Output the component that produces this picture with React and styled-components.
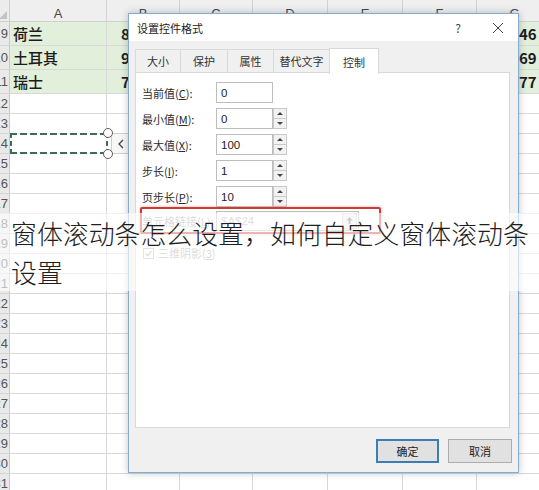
import React from 'react';
import styled, { createGlobalStyle } from 'styled-components';

const Global = createGlobalStyle`
  html, body { margin: 0; padding: 0; background: #fff; }
  body { width: 539px; height: 490px; overflow: hidden; font-family: "Noto Sans CJK SC", "Noto Sans", sans-serif; }
  * { box-sizing: border-box; }
`;

const Stage = styled.div`
  position: relative;
  width: 539px;
  height: 490px;
  overflow: hidden;
  background: #fff;
`;

const COLS = [10, 97, 73, 73, 75, 75, 74, 76];

const Sheet = styled.div`
  display: grid;
  grid-template-columns: ${COLS.map((c) => c + 'px').join(' ')};
  grid-template-rows: 22px repeat(3, 24px) repeat(20, 20px);
`;

const Corner = styled.div`
  position: relative;
  background: #ececec;
  border-right: 1px solid #cfcfcf;
  border-bottom: 1px solid #cfcfcf;
  &::after {
    content: '';
    position: absolute;
    right: 2px;
    bottom: 2px;
    border-left: 8px solid transparent;
    border-bottom: 8px solid #c4c4c4;
  }
`;

const ColHead = styled.div`
  background: #efefef;
  border-right: 1px solid #d2d2d2;
  border-bottom: 1px solid #cfcfcf;
  display: flex;
  align-items: center;
  justify-content: center;
  padding-top: 5px;
  font-family: "Liberation Sans", Arial, sans-serif;
  font-size: 13px;
  color: #444;
`;

const RowHead = styled.div`
  background: #e9e9e9;
  border-right: 1px solid #c9c9c9;
  border-bottom: 1px solid #d4d4d4;
  display: flex;
  align-items: center;
  justify-content: flex-end;
  overflow: hidden;
  padding-right: 1px;
  font-family: "Liberation Sans", Arial, sans-serif;
  font-size: 13px;
  color: #555;
  white-space: nowrap;
`;

const Cell = styled.div`
  background: ${(p) => (p.$fill ? '#e2efda' : '#fff')};
  border-right: 1px solid #d8d8d8;
  border-bottom: 1px solid #d8d8d8;
  display: flex;
  align-items: center;
  padding-left: ${(p) => p.$pad || 4}px;
  font-family: "Noto Sans CJK SC", "Liberation Sans", sans-serif;
  font-size: 15px;
  font-weight: ${(p) => (p.$bold ? 700 : 500)};
  color: #1c1c1c;
  white-space: nowrap;
  overflow: hidden;
`;

const DATA = [
  { n: 9, a: '荷兰', b: '85', g: '46' },
  { n: 10, a: '土耳其', b: '93', g: '69' },
  { n: 11, a: '瑞士', b: '78', g: '77' },
];

/* floating scrollbar control on the sheet */
const ScrollCtl = styled.div`
  position: absolute;
  left: 10px;
  top: 133px;
  display: flex;
  align-items: stretch;
  height: 21px;
`;

const DASH = '#3f6b57';
const DashBox = styled.div`
  position: relative;
  width: 98px;
  background:
    repeating-linear-gradient(90deg, ${DASH} 0 7px, transparent 7px 10px) top left / 100% 2px no-repeat,
    repeating-linear-gradient(90deg, ${DASH} 0 7px, transparent 7px 10px) bottom left / 100% 2px no-repeat,
    repeating-linear-gradient(180deg, ${DASH} 0 5px, transparent 5px 8px) top left / 2px 100% no-repeat,
    repeating-linear-gradient(180deg, ${DASH} 0 5px, transparent 5px 8px) top right / 2px 100% no-repeat,
    rgba(255, 255, 255, 0.6);
`;

const Handle = styled.div`
  position: absolute;
  right: -5px;
  ${(p) => (p.$bottom ? 'bottom: -5px;' : 'top: -5px;')}
  width: 10px;
  height: 10px;
  border-radius: 50%;
  background: #fff;
  border: 1.5px solid #5d5d5d;
`;

const ArrowBtn = styled.div`
  width: 19px;
  margin-left: 3px;
  border: 1px solid #cfcfcf;
  background: #f7f7f7;
  display: flex;
  align-items: center;
  justify-content: center;
  color: #444;
`;

/* dialog */
const Dialog = styled.div`
  position: absolute;
  left: 128px;
  top: 13px;
  width: 391px;
  height: 460px;
  border: 1px solid #86abcf;
  background: #f0f0f0;
  box-shadow: 0 0 7px rgba(60, 80, 110, 0.35);
  display: flex;
  flex-direction: column;
  font-family: "Noto Sans CJK SC", "Noto Sans", sans-serif;
  font-size: 11px;
  color: #222;
`;

const TitleBar = styled.div`
  height: 27px;
  background: #fff;
  display: flex;
  align-items: center;
  padding-left: 8px;
  padding-right: 10px;
  flex-shrink: 0;
`;

const Title = styled.span`
  flex: 1;
  font-size: 11px;
  color: #222;
`;

const TitleIcon = styled.span`
  width: 20px;
  display: flex;
  justify-content: center;
  color: #444;
  font-size: 12px;
  margin-left: ${(p) => p.$gap || 0}px;
`;

const Body = styled.div`
  flex: 1;
  padding: 7px 8px 0 6px;
  display: flex;
  flex-direction: column;
`;

const Tabs = styled.div`
  display: flex;
  align-items: flex-end;
  height: 25px;
  position: relative;
  z-index: 1;
`;

const Tab = styled.div`
  width: ${(p) => p.$w}px;
  height: ${(p) => (p.$active ? 26 : 24)}px;
  margin-bottom: ${(p) => (p.$active ? -1 : 0)}px;
  background: ${(p) => (p.$active ? '#fff' : '#f0f0f0')};
  border: 1px solid #d9d9d9;
  border-bottom: ${(p) => (p.$active ? 'none' : '1px solid #d9d9d9')};
  margin-left: -1px;
  display: flex;
  align-items: center;
  justify-content: center;
  color: #333;
  font-size: 11px;
  &:first-child { margin-left: 0; }
`;

const Panel = styled.div`
  height: 356px;
  background: #fff;
  border: 1px solid #d9d9d9;
  margin-top: -1px;
  padding: 9px 6px 0 6px;
  display: flex;
  flex-direction: column;
`;

const Row = styled.div`
  display: flex;
  align-items: center;
  height: 21px;
  margin-bottom: ${(p) => (p.$last ? 0 : 5)}px;
`;

const Label = styled.span`
  width: 74px;
  flex-shrink: 0;
  color: ${(p) => (p.$dim ? '#a3a3a3' : '#2a2a2a')};
  font-size: 11px;
  white-space: nowrap;
`;

const Input = styled.div`
  position: relative;
  width: ${(p) => p.$w || 57}px;
  height: ${(p) => p.$h || 21}px;
  border: 1px solid #bdbdbd;
  background: #fff;
  display: flex;
  align-items: center;
  padding-left: 4px;
  font-family: "Liberation Sans", Arial, sans-serif;
  font-size: 11.5px;
  color: ${(p) => (p.$dim ? '#ababab' : '#222')};
`;

const Spin = styled.div`
  width: 14px;
  height: 21px;
  display: flex;
  flex-direction: column;
`;

const SpinBtn = styled.div`
  flex: 1;
  border: 1px solid #c8c8c8;
  background: #f2f2f2;
  display: flex;
  align-items: center;
  justify-content: center;
  & + & { border-top: none; }
`;

const Tri = styled.span`
  width: 0;
  height: 0;
  border-left: 3px solid transparent;
  border-right: 3px solid transparent;
  ${(p) => (p.$down ? 'border-top: 3px solid #444;' : 'border-bottom: 3px solid #444;')}
`;

const LinkBox = styled.div`
  display: flex;
  align-items: center;
  width: 241px;
  height: 27px;
  margin-left: -2px;
  border: 2px solid #cf3a34;
  border-radius: 2px;
  box-shadow: 0 0 3px rgba(207, 58, 52, 0.45);
`;

const RefBtn = styled.div`
  position: absolute;
  right: 1px;
  top: 1px;
  width: 15px;
  height: 16px;
  background: #ececec;
  border: 1px solid #d0d0d0;
  display: flex;
  align-items: center;
  justify-content: center;
`;

const CheckRow = styled.div`
  display: flex;
  align-items: center;
  gap: 4px;
  margin-top: 12px;
  height: 14px;
  padding-left: 1px;
  color: #a3a3a3;
  font-size: 11px;
`;

const CheckBox = styled.div`
  width: 11px;
  height: 11px;
  border: 1px solid #b8b8b8;
  background: #fff;
  display: flex;
  align-items: center;
  justify-content: center;
`;

const Footer = styled.div`
  display: flex;
  justify-content: flex-end;
  gap: 9px;
  padding-top: 11px;
  margin-right: -2px;
`;

const Button = styled.div`
  width: ${(p) => p.$w}px;
  height: 24px;
  background: #e1e1e1;
  border: ${(p) => (p.$primary ? '2px solid #3c7db8' : '1px solid #adadad')};
  display: flex;
  align-items: center;
  justify-content: center;
  font-size: 11px;
  color: #222;
`;

/* caption overlay */
const Caption = styled.div`
  position: absolute;
  left: 0;
  top: 213px;
  width: 539px;
  padding-left: 11px;
  padding-right: 8px;
  background: rgba(255, 255, 255, 0.62);
  font-family: "Noto Sans CJK SC", "Noto Sans", sans-serif;
  font-weight: 300;
  font-size: 25.9px;
  line-height: 39px;
  color: #1e1e1e;
  word-break: break-all;
`;

const Spinner = () => (
  <Spin>
    <SpinBtn><Tri /></SpinBtn>
    <SpinBtn><Tri $down /></SpinBtn>
  </Spin>
);

const FIELDS = [
  { pre: '当前值(', key: 'C', v: '0', spin: false },
  { pre: '最小值(', key: 'M', v: '0', spin: true },
  { pre: '最大值(', key: 'X', v: '100', spin: true },
  { pre: '步长(', key: 'I', v: '1', spin: true },
  { pre: '页步长(', key: 'P', v: '10', spin: true },
];

const TABS = [
  { t: '大小', w: 46 },
  { t: '保护', w: 48 },
  { t: '属性', w: 47 },
  { t: '替代文字', w: 57 },
  { t: '控制', w: 50, active: true },
];

export default function App() {
  const letters = ['A', 'B', 'C', 'D', 'E', 'F', 'G'];
  const rows = [];
  DATA.forEach((d) => {
    rows.push(<RowHead key={'h' + d.n}>{d.n}</RowHead>);
    rows.push(<Cell key={'a' + d.n} $fill $pad={3}>{d.a}</Cell>);
    rows.push(<Cell key={'b' + d.n} $fill $bold $pad={14}>{d.b}</Cell>);
    ['c', 'd', 'e', 'f'].forEach((c) =>
      rows.push(<Cell key={c + d.n} $fill />)
    );
    rows.push(<Cell key={'g' + d.n} $fill $bold $pad={42}>{d.g}</Cell>);
  });
  for (let n = 12; n <= 31; n++) {
    rows.push(<RowHead key={'h' + n}>{n}</RowHead>);
    for (let c = 1; c < 8; c++) rows.push(<Cell key={n + '-' + c} />);
  }

  return (
    <Stage>
      <Global />
      <Sheet>
        <Corner />
        {letters.map((l) => (
          <ColHead key={l}>{l}</ColHead>
        ))}
        {rows}
      </Sheet>

      <ScrollCtl>
        <DashBox>
          <Handle />
          <Handle $bottom />
        </DashBox>
        <ArrowBtn>
          <svg width="8" height="10" viewBox="0 0 8 10">
            <polyline points="6,1 2,5 6,9" fill="none" stroke="#444" strokeWidth="1.3" />
          </svg>
        </ArrowBtn>
      </ScrollCtl>

      <Dialog>
        <TitleBar>
          <Title>设置控件格式</Title>
          <TitleIcon>?</TitleIcon>
          <TitleIcon $gap={20}>
            <svg width="12" height="12" viewBox="0 0 12 12">
              <path d="M1 1 L11 11 M11 1 L1 11" stroke="#444" strokeWidth="1" />
            </svg>
          </TitleIcon>
        </TitleBar>
        <Body>
          <Tabs>
            {TABS.map((t) => (
              <Tab key={t.t} $w={t.w} $active={t.active}>{t.t}</Tab>
            ))}
          </Tabs>
          <Panel>
            {FIELDS.map((f, i) => (
              <Row key={f.key} $last={i === FIELDS.length - 1}>
                <Label>
                  {f.pre}<u>{f.key}</u>):
                </Label>
                <Input>{f.v}</Input>
                {f.spin && <Spinner />}
              </Row>
            ))}
            <LinkBox>
              <Label $dim>单元格链接(<u>L</u>):</Label>
              <Input $w={143} $h={20} $dim>
                $A$24
                <RefBtn>
                  <svg width="9" height="9" viewBox="0 0 9 9">
                    <path d="M4.5 1 L1.5 4.5 H3.6 V8 H5.4 V4.5 H7.5 Z" fill="#777" />
                  </svg>
                </RefBtn>
              </Input>
            </LinkBox>
            <CheckRow>
              <CheckBox>
                <svg width="9" height="9" viewBox="0 0 9 9">
                  <polyline points="1.5,4.5 3.5,6.8 7.5,2" fill="none" stroke="#9a9a9a" strokeWidth="1.1" />
                </svg>
              </CheckBox>
              <span>三维阴影(<u>3</u>)</span>
            </CheckRow>
          </Panel>
          <Footer>
            <Button $w={63} $primary>确定</Button>
            <Button $w={64}>取消</Button>
          </Footer>
        </Body>
      </Dialog>

      <Caption>窗体滚动条怎么设置，如何自定义窗体滚动条设置</Caption>
    </Stage>
  );
}
